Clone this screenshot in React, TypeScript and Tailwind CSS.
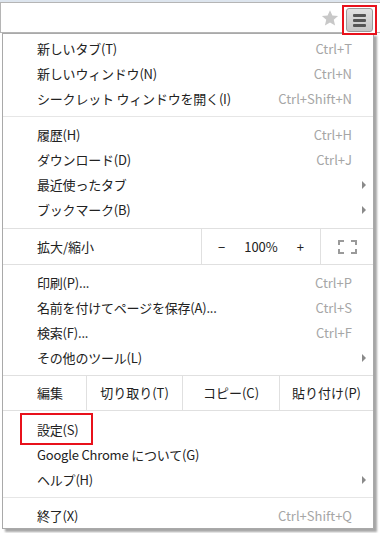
import React from "react";

type Item = { label: string; shortcut?: string; sub?: boolean; boxed?: boolean };

const group1: Item[] = [
  { label: "新しいタブ(T)", shortcut: "Ctrl+T" },
  { label: "新しいウィンドウ(N)", shortcut: "Ctrl+N" },
  { label: "シークレット ウィンドウを開く(I)", shortcut: "Ctrl+Shift+N" },
];

const group2: Item[] = [
  { label: "履歴(H)", shortcut: "Ctrl+H" },
  { label: "ダウンロード(D)", shortcut: "Ctrl+J" },
  { label: "最近使ったタブ", sub: true },
  { label: "ブックマーク(B)", sub: true },
];

const group3: Item[] = [
  { label: "印刷(P)...", shortcut: "Ctrl+P" },
  { label: "名前を付けてページを保存(A)...", shortcut: "Ctrl+S" },
  { label: "検索(F)...", shortcut: "Ctrl+F" },
  { label: "その他のツール(L)", sub: true },
];

const group4: Item[] = [
  { label: "設定(S)", boxed: true },
  { label: "Google Chrome について(G)" },
  { label: "ヘルプ(H)", sub: true },
];

function Row({ item }: { item: Item }) {
  return (
    <div className="relative flex h-[25px] items-center justify-between pl-[34px] pr-[21px]">
      <span className="tracking-[-0.2px] text-[#222]">{item.label}</span>
      {item.shortcut && <span className="text-[#a6a6a6]">{item.shortcut}</span>}
      {item.sub && (
        <span className="absolute right-[7px] top-[9px] h-0 w-0 border-y-[4px] border-l-[4px] border-y-transparent border-l-[#8a8a8a]" />
      )}
      {item.boxed && (
        <span className="absolute left-[17px] top-[-4px] h-[32px] w-[73px] border-2 border-[#e8111b]" />
      )}
    </div>
  );
}

function Sep() {
  return <div className="my-[5px] h-px bg-[#e6e6e6]" />;
}

function FullscreenIcon() {
  return (
    <svg width="19" height="14" viewBox="0 0 19 14" fill="none" stroke="#9a9a9a" strokeWidth="2">
      <path d="M1 5V1h5M13 1h5v4M18 9v4h-5M6 13H1V9" />
    </svg>
  );
}

export default function App() {
  return (
    <div
      className="relative h-[533px] w-[380px] overflow-hidden bg-white text-[13px]"
      style={{ fontFamily: '"Noto Sans CJK JP", "Noto Sans", sans-serif' }}
    >
      {/* toolbar */}
      <div className="h-[2px] bg-[#dde5ee]" />
      <div className="flex h-[31px] border-y border-l border-[#b5b5b5] bg-white">
        <div className="flex-1" />
        <svg width="18" height="18" viewBox="0 0 24 24" className="mr-[3px] mt-[6px]">
          <path
            fill="#c8c8c8"
            d="M12 1.5l3.2 7.1 7.6.7-5.8 5.1 1.8 7.6L12 18l-6.8 4 1.8-7.6-5.8-5.1 7.6-.7z"
          />
        </svg>
        <div className="relative mt-[2px] flex h-[30px] w-[35px] items-center justify-center border-2 border-[#e8111b] bg-white">
          <div className="flex h-[24px] w-[27px] flex-col items-center justify-center gap-[2px] rounded-[3px] border border-[#9b9b9b] bg-gradient-to-b from-[#e2e2e2] to-[#c4c4c4]">
            <span className="h-[3px] w-[13px] rounded-[1px] bg-[#555]" />
            <span className="h-[3px] w-[13px] rounded-[1px] bg-[#555]" />
            <span className="h-[3px] w-[13px] rounded-[1px] bg-[#555]" />
          </div>
        </div>
        <div className="w-[3px]" />
      </div>

      {/* menu */}
      <div className="ml-[2px] w-[372px] border border-[#a9a9a9] bg-white pt-[2px] shadow-[3px_3px_2px_rgba(0,0,0,0.35)]">
        {group1.map((i) => (
          <Row key={i.label} item={i} />
        ))}
        <Sep />
        {group2.map((i) => (
          <Row key={i.label} item={i} />
        ))}
        <div className="mt-[6px] flex h-[37px] border-y border-[#e0e0e0]">
          <div className="flex w-[198px] items-center pl-[34px] text-[#222]">拡大/縮小</div>
          <div className="grid w-[120px] grid-cols-3 items-center border-x border-[#e0e0e0] text-center text-[#222]">
            <span>−</span>
            <span>100%</span>
            <span>+</span>
          </div>
          <div className="flex flex-1 items-center justify-center">
            <FullscreenIcon />
          </div>
        </div>
        <div className="h-[5px]" />
        {group3.map((i) => (
          <Row key={i.label} item={i} />
        ))}
        <div className="mt-[5px] flex h-[36px] border-y border-[#e0e0e0] text-[#222]">
          <div className="flex w-[83px] items-center pl-[34px]">編集</div>
          <div className="flex w-[96px] items-center justify-center border-l border-[#e0e0e0]">切り取り(T)</div>
          <div className="flex w-[97px] items-center justify-center border-l border-[#e0e0e0]">コピー(C)</div>
          <div className="flex flex-1 items-center justify-center border-l border-[#e0e0e0]">貼り付け(P)</div>
        </div>
        <div className="h-[6px]" />
        {group4.map((i) => (
          <Row key={i.label} item={i} />
        ))}
        <Sep />
        <Row item={{ label: "終了(X)", shortcut: "Ctrl+Shift+Q" }} />
      </div>
    </div>
  );
}
